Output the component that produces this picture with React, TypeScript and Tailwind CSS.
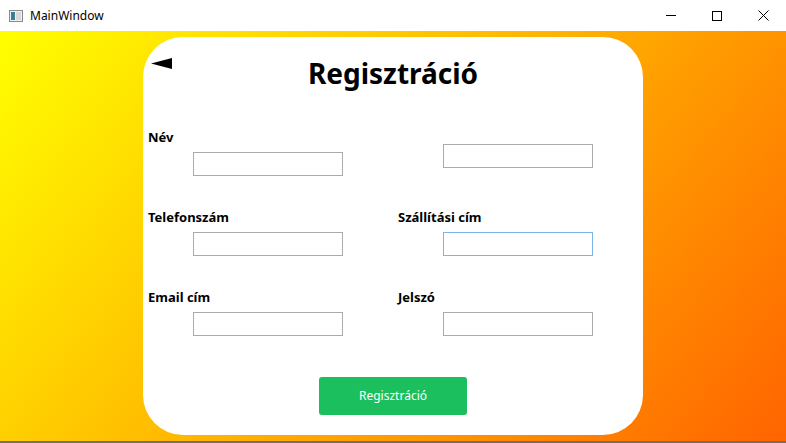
import React from 'react'

const font = { fontFamily: '"Noto Sans", "Open Sans", sans-serif' }

function Field({ label, focused, className = '' }: { label?: string; focused?: boolean; className?: string }) {
  return (
    <div className={`flex flex-col ${className}`}>
      {label ? <span className="mb-[5px] h-[19px] text-[13px] font-bold leading-[19px] text-black">{label}</span> : null}
      <div
        className={`ml-[45px] h-[24px] w-[150px] border bg-white ${focused ? 'border-[#7eb4ea]' : 'border-[#ababab]'}`}
      />
    </div>
  )
}

export default function App() {
  return (
    <div className="flex h-[443px] w-[786px] flex-col overflow-hidden bg-white" style={font}>
      {/* title bar */}
      <div className="flex h-[31px] shrink-0 items-center bg-white">
        <svg className="ml-[9px] h-[12px] w-[14px]" viewBox="0 0 14 12">
          <rect x="0.5" y="0.5" width="13" height="11" fill="#f2f2f2" stroke="#8a8a8a" />
          <rect x="2" y="2" width="4" height="8" fill="#3d7f8f" />
          <rect x="7" y="2" width="5" height="8" fill="#d9d9d9" />
        </svg>
        <span className="ml-[7px] text-[12px] text-black">MainWindow</span>
        <div className="ml-auto flex h-full">
          <div className="flex h-full w-[46px] items-center justify-center">
            <div className="h-px w-[10px] bg-black" />
          </div>
          <div className="flex h-full w-[46px] items-center justify-center">
            <div className="h-[10px] w-[10px] border border-black" />
          </div>
          <div className="flex h-full w-[46px] items-center justify-center">
            <svg width="11" height="11" viewBox="0 0 11 11">
              <path d="M0.5 0.5 L10.5 10.5 M10.5 0.5 L0.5 10.5" stroke="#000" strokeWidth="1" />
            </svg>
          </div>
        </div>
      </div>

      {/* client area */}
      <div className="flex flex-1 justify-center bg-[linear-gradient(130deg,#ffff00,#ff6400)] py-[6px]">
        <div className="flex w-[500px] flex-col rounded-[40px] bg-white">
          <div className="grid grid-cols-[1fr_auto_1fr] items-start pt-[14px]">
            <svg className="ml-[8px] mt-[7px]" width="22" height="11" viewBox="0 0 22 11">
              <polygon points="0,5.5 21,0 21,11" fill="#000" />
            </svg>
            <h1 className="text-[28px] font-bold leading-[44px] text-black">Regisztráció</h1>
            <div />
          </div>

          <div className="mt-[33px] grid grid-cols-[250px_250px] gap-y-[32px] pl-[5px]">
            <Field label="Név" />
            <Field className="pt-[16px]" />
            <Field label="Telefonszám" />
            <Field label="Szállítási cím" focused />
            <Field label="Email cím" />
            <Field label="Jelszó" />
          </div>

          <div className="mt-[41px] flex justify-center">
            <button className="h-[38px] w-[148px] rounded-[3px] bg-[#1bbf5e] text-[12px] text-white">
              Regisztráció
            </button>
          </div>
        </div>
      </div>
      <div className="h-[2px] shrink-0 bg-[#6f6f6f]" />
    </div>
  )
}
